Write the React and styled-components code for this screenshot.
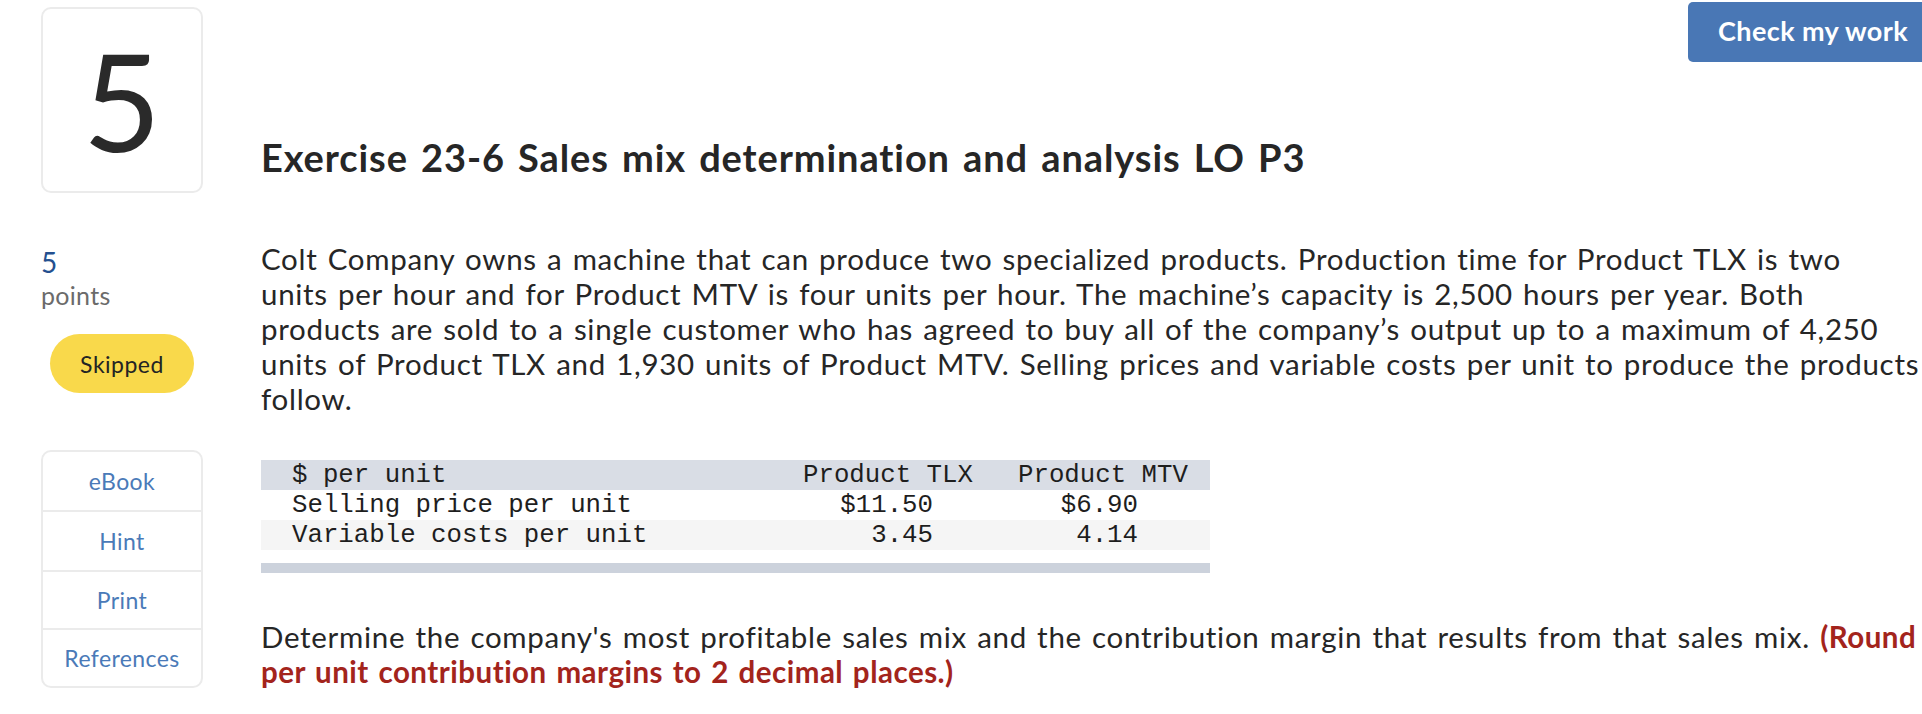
import React from "react";
import styled, { createGlobalStyle } from "styled-components";

const Global = createGlobalStyle`
  html, body { margin: 0; padding: 0; background: #fff; }
  body {
    font-family: Lato, "Open Sans", sans-serif;
    font-variant-ligatures: none;
    color: #262626;
    overflow: hidden;
    width: 1922px;
    height: 714px;
  }
`;

const Page = styled.div`
  display: flex;
  align-items: flex-start;
  gap: 58px;
  padding-left: 41px;
`;

const Side = styled.aside`
  width: 162px;
  flex: none;
  display: flex;
  flex-direction: column;
  margin-top: 7px;
`;

const NumberBox = styled.div`
  box-sizing: border-box;
  height: 186px;
  border: 2px solid #ebebeb;
  border-radius: 10px;
  display: flex;
  align-items: center;
  justify-content: center;
  font-size: 135px;
  font-weight: 400;
  color: #2a2a2a;
  line-height: 1;
`;

const PointsValue = styled.div`
  margin-top: 52px;
  font-size: 28px;
  line-height: 34px;
  color: #24508f;
`;

const PointsLabel = styled.div`
  font-size: 25px;
  line-height: 32px;
  color: #6b6b6b;
  letter-spacing: 0.3px;
`;

const StatusPill = styled.div`
  align-self: center;
  margin-top: 23px;
  width: 144px;
  height: 59px;
  border-radius: 30px;
  background: #f9d94b;
  display: flex;
  align-items: center;
  justify-content: center;
  font-size: 23px;
  letter-spacing: 0.5px;
  color: #242424;
`;

const Menu = styled.nav`
  margin-top: 57px;
  border: 2px solid #ebebeb;
  border-radius: 10px;
  display: flex;
  flex-direction: column;
  overflow: hidden;
`;

const MenuItem = styled.div`
  height: ${(p) => p.$h}px;
  display: flex;
  align-items: center;
  justify-content: center;
  font-size: 23px;
  letter-spacing: 0.4px;
  color: #4a7ab8;
  & + & {
    border-top: 2px solid #ebebeb;
  }
`;

const Main = styled.main`
  flex: 1;
  min-width: 0;
  display: flex;
  flex-direction: column;
`;

const TopBar = styled.div`
  display: flex;
  justify-content: flex-end;
  padding-top: 2px;
`;

const CheckButton = styled.button`
  height: 60px;
  border: none;
  border-radius: 5px 0 0 5px;
  background: #4977b5;
  color: #fff;
  font-family: Lato, "Open Sans", sans-serif;
  font-weight: 700;
  font-size: 27px;
  letter-spacing: 0.4px;
  padding: 0 14px 4px 30px;
  cursor: pointer;
`;

const Title = styled.h1`
  margin: 72px 0 0;
  font-size: 38px;
  line-height: 46px;
  font-weight: 700;
  letter-spacing: 0.9px;
  word-spacing: 3px;
  color: #262626;
`;

const Body = styled.p`
  margin: ${(p) => p.$mt}px 0 0;
  font-size: 29.5px;
  line-height: 35px;
  letter-spacing: 0.7px;
  word-spacing: 2px;
  color: #262626;
`;

const Line = styled.span`
  display: block;
  white-space: nowrap;
`;

const Emph = styled.strong`
  color: #a3241c;
  font-weight: 700;
  letter-spacing: 0.5px;
`;

const Table = styled.div`
  margin-top: 44px;
  width: 949px;
  display: flex;
  flex-direction: column;
  font-family: "Liberation Mono", "Courier New", monospace;
  font-size: 25.75px;
  color: #1e1e1e;
`;

const Row = styled.div`
  display: grid;
  grid-template-columns: 519px 216px 214px;
  height: 30px;
  box-sizing: border-box;
  padding-top: 1px;
  line-height: 29px;
  background: ${(p) => p.$bg};
  white-space: pre;
`;

const Cell = styled.div`
  text-align: ${(p) => p.$align || "left"};
  padding-left: ${(p) => p.$pl || 0}px;
  padding-right: ${(p) => p.$pr || 0}px;
`;

const Gap = styled.div`
  height: 13px;
`;

const Bar = styled.div`
  height: 10px;
  background: #ccd2dc;
`;

export default function App() {
  return (
    <>
      <Global />
      <Page>
        <Side>
          <NumberBox>5</NumberBox>
          <PointsValue>5</PointsValue>
          <PointsLabel>points</PointsLabel>
          <StatusPill>Skipped</StatusPill>
          <Menu>
            <MenuItem $h={58}>eBook</MenuItem>
            <MenuItem $h={58}>Hint</MenuItem>
            <MenuItem $h={56}>Print</MenuItem>
            <MenuItem $h={56}>References</MenuItem>
          </Menu>
        </Side>
        <Main>
          <TopBar>
            <CheckButton>Check my work</CheckButton>
          </TopBar>
          <Title>Exercise 23-6 Sales mix determination and analysis LO P3</Title>
          <Body $mt={61}>
            <Line>Colt Company owns a machine that can produce two specialized products. Production time for Product TLX is two</Line>
            <Line>units per hour and for Product MTV is four units per hour. The machine’s capacity is 2,500 hours per year. Both</Line>
            <Line>products are sold to a single customer who has agreed to buy all of the company’s output up to a maximum of 4,250</Line>
            <Line>units of Product TLX and 1,930 units of Product MTV. Selling prices and variable costs per unit to produce the products</Line>
            <Line>follow.</Line>
          </Body>
          <Table>
            <Row $bg="#d9dde5">
              <Cell $pl={31}>$ per unit</Cell>
              <Cell $align="center">Product TLX</Cell>
              <Cell $align="center">Product MTV</Cell>
            </Row>
            <Row $bg="#ffffff">
              <Cell $pl={31}>Selling price per unit</Cell>
              <Cell $align="right" $pr={63}>$11.50</Cell>
              <Cell $align="right" $pr={72}>$6.90</Cell>
            </Row>
            <Row $bg="#f5f5f5">
              <Cell $pl={31}>Variable costs per unit</Cell>
              <Cell $align="right" $pr={63}>3.45</Cell>
              <Cell $align="right" $pr={72}>4.14</Cell>
            </Row>
            <Gap />
            <Bar />
          </Table>
          <Body $mt={46}>
            <Line>
              Determine the company's most profitable sales mix and the contribution margin that results from that sales mix.{" "}
              <Emph>(Round</Emph>
            </Line>
            <Line>
              <Emph>per unit contribution margins to 2 decimal places.)</Emph>
            </Line>
          </Body>
        </Main>
      </Page>
    </>
  );
}
